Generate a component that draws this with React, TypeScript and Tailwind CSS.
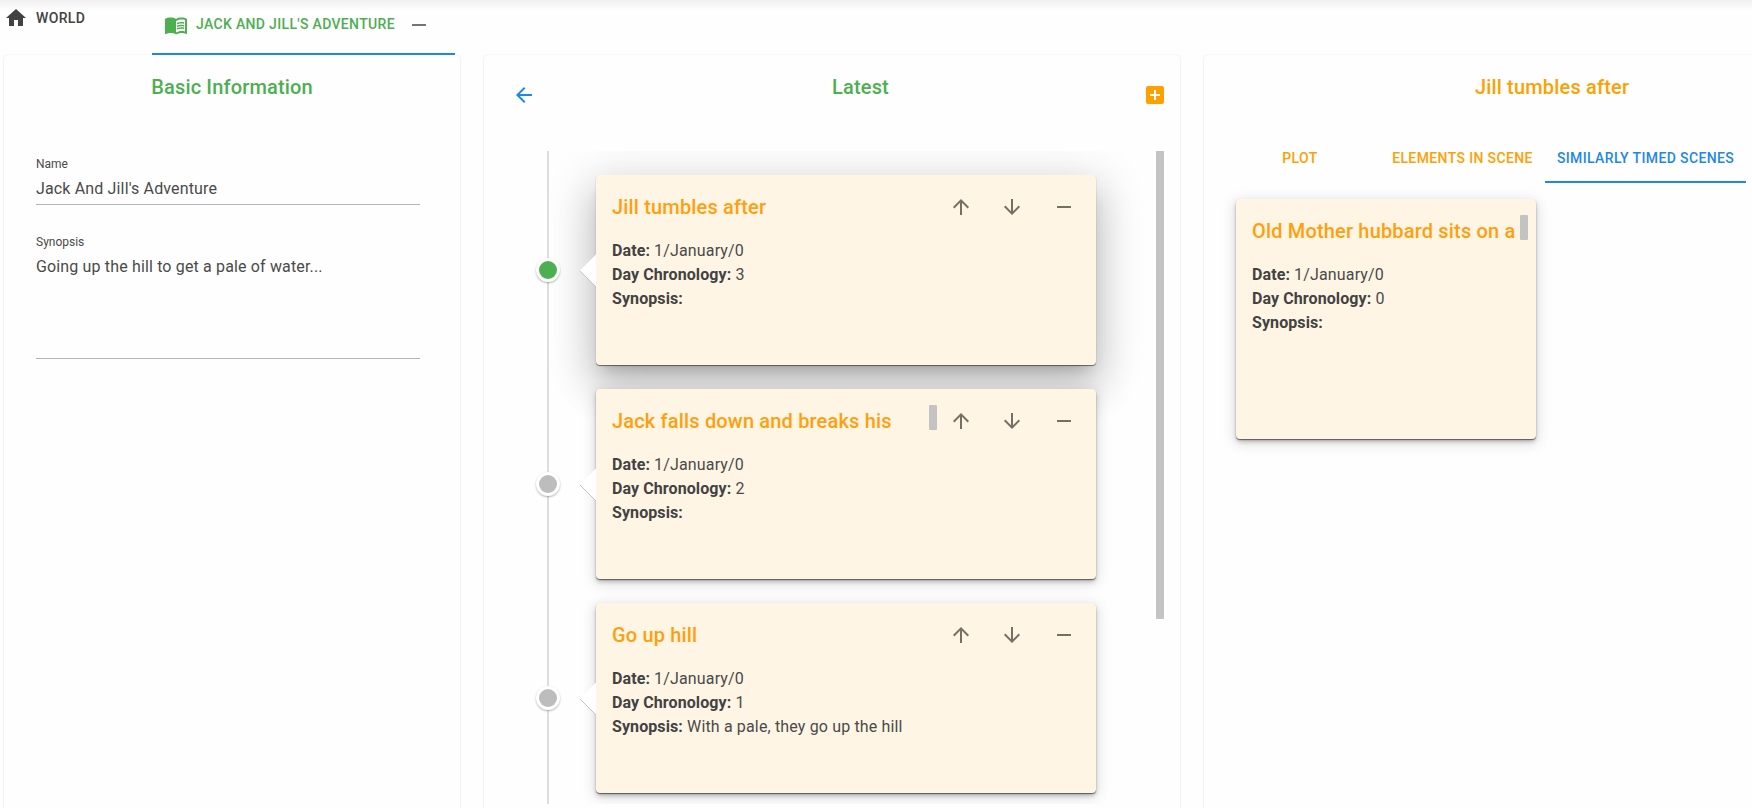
import React from "react";
import { MdAddBox, MdArrowBack, MdArrowDownward, MdArrowUpward, MdHome, MdRemove } from "react-icons/md";

type Scene = { title: string; day: number; synopsis: string; selected?: boolean; scroll?: boolean };

const scenes: Scene[] = [
  { title: "Jill tumbles after", day: 3, synopsis: "", selected: true },
  { title: "Jack falls down and breaks his", day: 2, synopsis: "", scroll: true },
  { title: "Go up hill", day: 1, synopsis: "With a pale, they go up the hill" },
];

const panel = "h-[780px] shrink-0 rounded-[4px] bg-[#fefefe] shadow-[0_0_1px_rgba(0,0,0,0.14),0_1px_2px_rgba(0,0,0,0.12)]";
const softShadow = "shadow-[0_1px_1px_rgba(0,0,0,0.5),0_3px_5px_-1px_rgba(0,0,0,0.3),0_3px_14px_2px_rgba(0,0,0,0.12)]";
const deepShadow = "shadow-[0_1px_1px_rgba(0,0,0,0.5),0_11px_15px_-7px_rgba(0,0,0,0.2),0_9px_46px_8px_rgba(0,0,0,0.12),0_24px_38px_3px_rgba(0,0,0,0.14)]";

function BookIcon() {
  return (
    <svg className="size-6" viewBox="0 0 24 24" fill="currentColor">
      <path d="M21 5c-1.11-.35-2.33-.5-3.5-.5-1.95 0-4.05.4-5.5 1.5-1.45-1.1-3.55-1.5-5.5-1.5S2.45 4.9 1 6v14.65c0 .25.25.5.5.5.1 0 .15-.05.25-.05C3.1 20.45 5.05 20 6.5 20c1.95 0 4.05.4 5.5 1.5 1.35-.85 3.8-1.5 5.5-1.5 1.65 0 3.35.3 4.75 1.05.1.05.15.05.25.05.25 0 .5-.25.5-.5V6c-.6-.45-1.25-.75-2-1zm0 13.5c-1.1-.35-2.3-.5-3.5-.5-1.7 0-4.15.65-5.5 1.500V8c1.35-.85 3.8-1.5 5.5-1.5 1.2 0 2.4.15 3.5.5v11.500z" />
      <path d="M17.5 10.5c.88 0 1.73.09 2.5.26V9.240c-.79-.15-1.64-.24-2.5-.24-1.7 0-3.24.29-4.5.83v1.66c1.13-.64 2.7-.99 4.5-.99zM13 12.490v1.66c1.13-.64 2.7-.99 4.5-.99.88 0 1.73.09 2.5.26V11.900c-.79-.15-1.64-.24-2.5-.24-1.7 0-3.24.3-4.5.83zM17.5 14.330c-1.7 0-3.24.29-4.5.83v1.66c1.13-.64 2.7-.99 4.5-.99.88 0 1.73.09 2.5.26v-1.52c-.79-.16-1.64-.24-2.5-.24z" />
    </svg>
  );
}

function Details({ day, synopsis }: { day: number; synopsis: string }) {
  return (
    <div className="mt-4 text-[16px] leading-6 tracking-[0.15px] text-[#4a4a4a]">
      <p><b className="font-bold tracking-[0.09px] text-[#424242]">Date:</b> 1/January/0</p>
      <p><b className="font-bold tracking-[0.09px] text-[#424242]">Day Chronology:</b> {day}</p>
      <p><b className="font-bold tracking-[0.09px] text-[#424242]">Synopsis:</b> {synopsis}</p>
    </div>
  );
}

function TimelineItem({ scene }: { scene: Scene }) {
  return (
    <div className="flex h-[214px] items-start pt-6">
      <div className="flex h-[190px] w-20 shrink-0 items-center pl-5">
        <span className="z-10 flex size-6 items-center justify-center rounded-full bg-white shadow-[0_1px_2px_rgba(0,0,0,0.3)]">
          <span className={`size-[18px] rounded-full ${scene.selected ? "bg-[#4caf50]" : "bg-[#bdbdbd]"}`} />
        </span>
      </div>
      <div className={`relative h-[190px] w-[500px] rounded-[4px] bg-[#fff5e5] px-4 pt-4 ${scene.selected ? deepShadow : softShadow}`}>
        <svg className="absolute top-[79px] -left-4" width="16" height="33" viewBox="0 0 16 33">
          <path d="M16 0.500L0 16.500L16 32.500Z" fill="#fff" />
          <path d="M0 17L16 33" stroke="#c4c4c4" strokeWidth="1" />
        </svg>
        <div className="flex h-8 items-center">
          <h3 className="w-[317px] text-[20px] font-medium leading-8 tracking-[0.17px] whitespace-nowrap text-[#ff9f0d]">{scene.title}</h3>
          <span className={`-mt-2 h-[25px] w-2 rounded-[1px] ${scene.scroll ? "bg-[#c3c3c3]" : ""}`} />
          <div className="flex items-center text-[24px] text-[#757064]">
            <MdArrowUpward className="ml-3" />
            <MdArrowDownward className="ml-[27px]" />
            <MdRemove className="ml-7" />
          </div>
        </div>
        <Details day={scene.day} synopsis={scene.synopsis} />
      </div>
    </div>
  );
}

export default function App() {
  return (
    <div className="flex h-[808px] w-full flex-col overflow-hidden bg-[#fefefe] font-[Roboto,sans-serif] text-[#424242]">
      <nav className="flex h-[55px] shrink-0 items-start bg-linear-to-b from-[#f0f0f0] to-[#fefefe] to-[10px] text-[14px] font-medium tracking-[0.33px]">
        <div className="flex h-9 w-[152px] items-center pl-1">
          <MdHome className="text-[24px]" />
          <span className="ml-2">WORLD</span>
        </div>
        <div className="z-10 flex h-[55px] w-[303px] items-center border-b-2 border-[#1e88e5] pb-1 pl-3 text-[#4caf50]">
          <BookIcon />
          <span className="ml-2">JACK AND JILL'S ADVENTURE</span>
          <MdRemove className="ml-[12px] text-[24px] text-[#757575]" />
        </div>
      </nav>

      <main className="flex min-h-0 w-[1900px] flex-1 items-start gap-6 pl-1">
        <section className={`${panel} w-[456px] px-8`}>
          <h2 className="pt-4 text-center text-[20px] font-medium leading-8 tracking-[0.15px] text-[#4caf50]">Basic Information</h2>
          <div className="mt-[53px] w-96 text-[#4a4a4a]">
            <label className="block text-[12px] leading-4">Name</label>
            <div className="h-[33px] border-b border-[#b5b5b5] pt-[5px] text-[16px] leading-6 tracking-[0.15px]">Jack And Jill's Adventure</div>
            <label className="mt-[29px] block text-[12px] leading-4">Synopsis</label>
            <div className="h-[109px] border-b border-[#b5b5b5] pt-[5px] text-[16px] leading-6 tracking-[0.15px]">Going up the hill to get a pale of water...</div>
          </div>
        </section>

        <section className={`${panel} flex w-[696px] flex-col px-4`}>
          <header className="flex h-[96px] items-start pt-4">
            <MdArrowBack className="mt-3 ml-3 text-[24px] text-[#1e88e5]" />
            <h2 className="ml-[296px] flex-1 text-[20px] font-medium leading-8 tracking-[0.17px] text-[#4caf50]">Latest</h2>
            <MdAddBox className="mt-3 -mr-[3px] text-[24px] text-[#ffa000]" />
          </header>
          <div className="flex h-[653px] shrink-0 justify-between overflow-hidden pl-4">
            <div className="relative w-[620px]">
              <span className="absolute top-0 left-[31px] h-full w-[2px] bg-[#dedede]" />
              {scenes.map((s) => <TimelineItem key={s.title} scene={s} />)}
            </div>
            <span className="h-[468px] w-2 rounded-b-[1px] bg-[#c3c3c3]" />
          </div>
        </section>

        <section className={`${panel} w-[696px]`}>
          <h2 className="pt-4 text-center text-[20px] font-medium leading-8 tracking-[0.17px] text-[#ffa000]">Jill tumbles after</h2>
          <div className="mt-[31px] flex h-[49px] pl-4 text-[14px] font-medium tracking-[0.37px] text-[#ffa000]">
            <span className="flex w-40 items-center justify-center">PLOT</span>
            <span className="flex w-[165px] items-center justify-center">ELEMENTS IN SCENE</span>
            <span className="flex w-[201px] items-center justify-center border-b-2 border-[#1e88e5] pt-[2px] text-[#1e88e5]">SIMILARLY TIMED SCENES</span>
          </div>
          <article className={`mt-4 ml-8 h-[240px] w-[300px] rounded-[4px] bg-[#fff5e5] px-4 pt-4 ${softShadow}`}>
            <div className="flex h-8 items-center">
              <h3 className="w-[268px] shrink-0 text-[20px] font-medium leading-8 tracking-[0.17px] whitespace-nowrap text-[#ff9f0d]">Old Mother hubbard sits on a</h3>
              <span className="-mt-2 h-[25px] w-2 shrink-0 rounded-[1px] bg-[#c3c3c3]" />
            </div>
            <Details day={0} synopsis="" />
          </article>
        </section>
      </main>
    </div>
  );
}
